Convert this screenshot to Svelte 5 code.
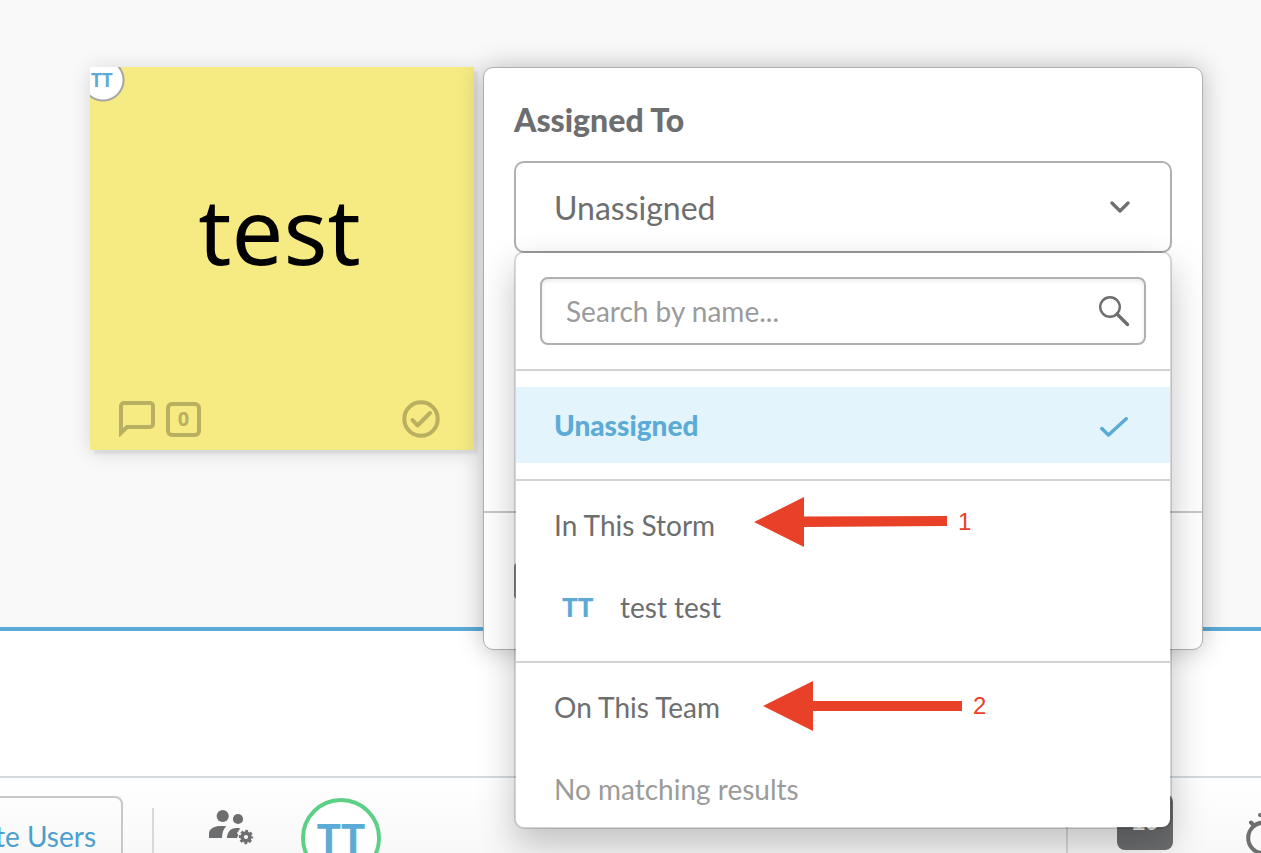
<script>
  let assignee = $state('unassigned');
  let query = $state('');
</script>

<main class="app">
  <section class="board">
    <article class="note">
      <span class="note-owner">TT</span>
      <p>test</p>
      <footer>
        <button aria-label="Comments">
          <svg width="36" height="36" viewBox="0 0 36 36"><path d="M2 32V5a3 3 0 0 1 3-3h26a3 3 0 0 1 3 3v18a3 3 0 0 1-3 3H8z" fill="none" stroke="currentColor" stroke-width="4" /></svg>
        </button>
        <button class="votes" aria-label="Votes">0</button>
        <button class="done" aria-label="Mark complete">
          <svg width="38" height="38" viewBox="0 0 38 38" fill="none" stroke="currentColor" stroke-width="4"><circle cx="19" cy="19" r="16.7" /><path d="M10.500 20l5 5.500L28 13" stroke-linecap="round" stroke-linejoin="round" /></svg>
        </button>
      </footer>
    </article>

    <aside class="panel">
      <div class="panel-body">
        <label class="title" for="assignee">Assigned To</label>
        <div class="picker">
          <select id="assignee" bind:value={assignee}>
            <option value="unassigned">Unassigned</option>
            <option value="test">test test</option>
          </select>
          <svg class="chevron" width="20" height="12" viewBox="0 0 20 12"><path d="M2 2l8 8 8-8" fill="none" stroke="currentColor" stroke-width="3.200" stroke-linecap="round" stroke-linejoin="round" /></svg>

          <div class="menu">
            <div class="search">
              <input type="text" placeholder="Search by name..." aria-label="Search by name" bind:value={query} />
              <svg width="32" height="32" viewBox="0 0 32 32" fill="none" stroke="currentColor"><circle cx="12" cy="12" r="9.800" stroke-width="2.400" /><path d="M19 19l10.500 10.500" stroke-width="3.400" stroke-linecap="round" /></svg>
            </div>
            <div class="group current">
              <button class="option selected">
                Unassigned
                <svg width="28" height="20" viewBox="0 0 28 20"><path d="M1.800 11.500l6.700 6.500L26.200 1.800" fill="none" stroke="currentColor" stroke-width="3.500" stroke-linecap="round" stroke-linejoin="round" /></svg>
              </button>
            </div>
            <div class="group">
              <h3>In This Storm</h3>
              <div class="callout first">
                <svg width="193" height="50" viewBox="0 0 193 50"><path d="M0 25L50 0v19.500L193 19v10L50 30v20z" fill="currentColor" /></svg>
                <span>1</span>
              </div>
              <button class="option person"><b>TT</b>test test</button>
            </div>
            <div class="group last">
              <h3>On This Team</h3>
              <div class="callout second">
                <svg width="199" height="50" viewBox="0 0 199 50"><path d="M0 25L50 0v20H199v10H50v20z" fill="currentColor" /></svg>
                <span>2</span>
              </div>
              <p class="empty">No matching results</p>
            </div>
          </div>
        </div>
      </div>
      <div class="panel-footer"><input type="checkbox" aria-label="Option" /></div>
    </aside>
  </section>

  <section class="tray"></section>

  <nav class="toolbar">
    <div class="invite"><button>Invite Users</button></div>
    <i class="rule"></i>
    <button class="people" aria-label="Manage users">
      <svg width="46" height="38" viewBox="0 0 46 38" fill="currentColor">
        <circle cx="14.700" cy="8" r="6.100" /><circle cx="30" cy="11" r="5.100" />
        <path d="M1 30v-4.500C1 20.500 6.500 18 13 18c2 0 3.700 0 5.400.3-3.200 2.700-4.200 6.700-4.400 11.700z" />
        <path d="M19 30c0-6 4-10 9-10 1.600 0 3 .1 4.300.5-1.800 2-2.100 3.500-3.300 4.500l1.300 2-1.300 3z" />
        <circle cx="38" cy="29" r="3.900" fill="none" stroke="currentColor" stroke-width="3.600" />
        <circle cx="38" cy="29" r="6" fill="none" stroke="currentColor" stroke-width="2.400" stroke-dasharray="2.700 2.012" stroke-dashoffset="1.350" />
      </svg>
    </button>
    <span class="avatar">TT</span>
    <div class="right">
      <i class="rule"></i>
      <span class="count">10</span>
      <button class="timer" aria-label="Timer">
        <svg width="40" height="44" viewBox="0 0 40 44" fill="none" stroke="currentColor" stroke-width="4"><circle cx="17.500" cy="25" r="15.300" /><path d="M14 2h7M5 9.500l2.500 2.500M30 9.500L27.500 12M17.500 25v-8" stroke-linecap="round" /></svg>
      </button>
    </div>
  </nav>
</main>

<style>
  :global(body) { margin: 0; }
  * { box-sizing: border-box; }
  .app {
    display: flex; flex-direction: column; height: 100vh; overflow: hidden;
    font-family: Lato, "Open Sans", sans-serif; font-size: 28px; color: #6d6e70; background: #fff;
  }
  button { font: inherit; color: inherit; background: none; border: 0; padding: 0; cursor: pointer; }
  svg { display: block; flex: none; }
  h3, p { margin: 0; font-weight: 400; }

  .board {
    flex: 0 0 631px; min-height: 0; display: flex; align-items: flex-start; gap: 9px;
    padding: 67px 58px 0 90px; background: #f9f9f9; border-bottom: 4px solid #5babd6;
  }
  .board { height: 631px; }
  .note {
    position: relative; flex: none; width: 384px; height: 383px; padding: 0 34px 12px 29px;
    display: flex; flex-direction: column; justify-content: flex-end; background: #f6ea82;
    box-shadow: 4px 4px 2px rgba(0, 0, 0, .06), 0 2px 20px rgba(0, 0, 0, .14);
  }
  .note p { flex: 1; display: grid; place-items: center; padding: 0 0 8px 0; font: 92px/92px "Noto Sans", sans-serif; color: #000; }
  .note footer { display: flex; align-items: center; gap: 11px; color: #b9af60; }
  .note-owner {
    position: absolute; top: 0; left: 0; width: 36px; height: 36px; padding: 2px 0 0 1px;
    background: radial-gradient(circle at 13px 13px, #fff 19px, #a5a5a5 20px, #a5a5a5 21px, transparent 22px);
    font-size: 18px; line-height: 22px; font-weight: 900; color: #5babd6;
  }
  .votes {
    width: 35px; height: 35px; border: 4px solid; border-radius: 6px;
    font: 700 20px/24px "Noto Sans", sans-serif;
  }
  .done { margin-left: auto; }

  .panel {
    position: relative; z-index: 1; flex: 1; border: 1px solid #b0b0b0; border-radius: 10px;
    background: #fff; box-shadow: 0 0 26px rgba(0, 0, 0, .25);
  }
  .panel-body { height: 443px; padding: 32px 30px 0; }
  .title { display: block; padding-bottom: 21px; font-size: 32px; line-height: 40px; font-weight: 900; }
  .picker { position: relative; }
  select {
    display: block; width: 100%; height: 92px; padding: 0 38px; appearance: none; background: #fff;
    border: 2px solid #b0b0b0; border-radius: 10px; font: inherit; font-size: 32px; color: inherit;
  }
  .chevron { position: absolute; right: 42px; top: 40px; }
  .panel-footer { height: 138px; padding: 50px 30px; border-top: 2px solid #c8c8c8; }
  .panel-footer input {
    display: block; width: 36px; height: 36px; margin: 0; appearance: none;
    border: 2px solid #8a8a8a; border-radius: 4px;
  }

  .menu {
    position: absolute; top: 90px; left: 0; right: 0; border: 2px solid rgba(0, 0, 0, .15); border-radius: 10px;
    background: #fff; background-clip: padding-box; box-shadow: 0 16px 36px rgba(0, 0, 0, .23);
  }
  .search { position: relative; padding: 24px; border-bottom: 2px solid #d2d2d2; }
  .search input {
    display: block; width: 100%; height: 68px; padding: 0 60px 0 24px; border: 2px solid #b0b0b0; border-radius: 8px;
    font: inherit; color: inherit; box-shadow: inset 0 2px 4px rgba(0, 0, 0, .08);
  }
  .search input::placeholder { color: #9b9b9b; opacity: 1; }
  .search svg { position: absolute; right: 40px; top: 42px; }
  .group { position: relative; padding-bottom: 16px; border-bottom: 2px solid #d2d2d2; }
  .current { padding-top: 16px; }
  .last { padding-bottom: 0; border: 0; }
  h3 { padding-left: 38px; font-size: 28px; line-height: 88px; }
  .option { display: flex; align-items: center; width: 100%; height: 76px; padding: 0 42px 0 38px; text-align: left; }
  .selected { justify-content: space-between; background: #e3f4fd; color: #5babd6; font-weight: 900; }
  .selected svg { margin-top: 4px; }
  .person b { width: 66px; padding-left: 8px; font-weight: 900; font-size: 26px; color: #5babd6; }
  .empty { padding-left: 38px; line-height: 76px; color: #9b9b9b; }
  .callout { position: absolute; top: 16px; display: flex; align-items: center; gap: 11px; color: #e94127; font: 24px/50px "Liberation Sans", sans-serif; }
  .first { left: 238px; }
  .second { left: 247px; top: 18px; }

  .tray { flex: 0 0 145px; }
  .toolbar {
    flex: 1; min-height: 0; display: flex; align-items: flex-start; padding-top: 18px;
    border-top: 2px solid #d5dadf; background: linear-gradient(#fff, #f8f8f8);
  }
  .invite { display: flex; justify-content: flex-end; width: 123px; }
  .invite button {
    flex: none; height: 80px; padding: 0 25px; border: 2px solid #c8c8c8; border-radius: 8px; color: #4c9fcc; white-space: nowrap;
  }
  .rule { width: 2px; height: 60px; margin: 12px 0 0 29px; background: #d5dadf; }
  .people { margin: 12px 0 0 54px; }
  .avatar {
    display: grid; place-items: center; width: 80px; height: 80px; margin: 2px 0 0 47px; border: 4px solid #5ecf86;
    border-radius: 50%; background: #fff; color: #5babd6; font-size: 40px; font-weight: 900;
  }
  .right { display: flex; margin-left: auto; margin-right: -25px; }
  .right .rule { margin-left: 0; }
  .count {
    width: 56px; height: 56px; margin: -2px 73px 0 49px; border-radius: 8px; background: #6d6e70;
    color: #fff; text-align: center; font: 700 24px/56px "Liberation Sans", sans-serif;
  }
  .timer { margin-top: 6px; }
</style>
